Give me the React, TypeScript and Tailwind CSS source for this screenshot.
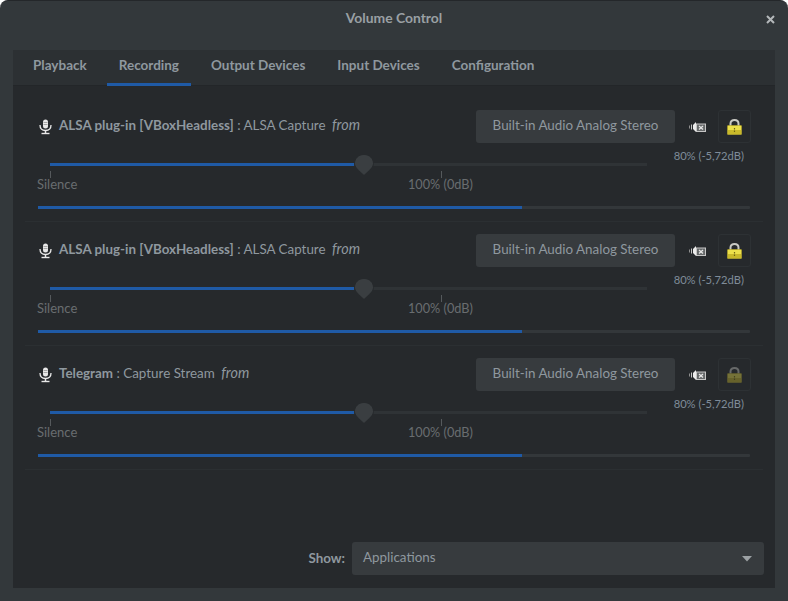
const tabs = ["Playback", "Recording", "Output Devices", "Input Devices", "Configuration"];

const streams = [
  { app: "ALSA plug-in [VBoxHeadless]", name: "ALSA Capture", locked: true },
  { app: "ALSA plug-in [VBoxHeadless]", name: "ALSA Capture", locked: true },
  { app: "Telegram", name: "Capture Stream", locked: false },
];

function MicIcon() {
  return (
    <svg width="13" height="16" viewBox="0 0 13 16" className="shrink-0">
      <rect x="4" y="0.5" width="5" height="9" rx="2.5" fill="#e8e8e8" />
      <path d="M1 6 C1 10 3.5 11.5 6.5 11.5 C9.5 11.5 12 10 12 6" fill="none" stroke="#e8e8e8" strokeWidth="1.3" />
      <path d="M6.5 11.5 V14" stroke="#e8e8e8" strokeWidth="1.5" />
      <path d="M2.5 14.5 H10.5" stroke="#e8e8e8" strokeWidth="1.4" />
      <path d="M4.5 3.5 H8.5 M4.5 5.5 H8.5" stroke="#8a8a8a" strokeWidth="0.7" />
    </svg>
  );
}

function MuteIcon() {
  return (
    <svg width="17" height="12" viewBox="0 0 17 12">
      <path d="M0 4.5 H1 V7.5 H0 Z" fill="#8f8f8f" />
      <path d="M2 3.5 H3 V8.5 H2 Z" fill="#c4c4c4" />
      <path d="M4 4 L7 1 V11 L4 8 Z" fill="#ececec" />
      <rect x="7" y="2.5" width="10" height="8.5" fill="#c6c6c6" />
      <rect x="8" y="3.5" width="8" height="6.5" fill="#66696a" />
      <path d="M10 5 L14 8.5 M14 5 L10 8.5" stroke="#e8e8e8" strokeWidth="1.3" />
    </svg>
  );
}

function LockIcon({ active }: { active: boolean }) {
  return (
    <svg width="15" height="16" viewBox="0 0 15 16" className={active ? "" : "opacity-40"}>
      <path d="M3.5 7 V4.5 C3.5 2.2 5.2 1 7.5 1 C9.8 1 11.5 2.2 11.5 4.5 V7" fill="none" stroke="#c9c9c4" strokeWidth="2" />
      <rect x="0.5" y="6.5" width="14" height="9" rx="0.5" fill="#ece04a" stroke="#b5a628" strokeWidth="0.6" />
      <rect x="1" y="11" width="13" height="4" fill="#c9b92a" />
      <path d="M7.5 9 V14" stroke="#6f6514" strokeWidth="1.2" strokeDasharray="1.5 1" />
    </svg>
  );
}

function StreamRow({ app, name, locked }: { app: string; name: string; locked: boolean }) {
  return (
    <div className="mx-[12px] h-[124px] border-b border-[#2b2f32] pt-[12px]">
      <div className="flex h-[33px] items-center pl-[14px] pr-[12px]">
        <MicIcon />
        <div className="ml-[7px] mb-[4px] flex-1 whitespace-nowrap leading-[20px]">
          <span className="font-bold">{app}</span>
          <span> : {name} </span>
          <i className="ml-[3px] text-[14.4px] leading-none">from</i>
        </div>
        <div className="flex h-[33px] w-[199px] items-center justify-center rounded-[3px] bg-[#373b3e] pb-[2px]">
          Built-in Audio Analog Stereo
        </div>
        <div className="flex w-[43px] justify-center pl-[2px] pt-[1px]">
          <MuteIcon />
        </div>
        <div className="flex h-[33px] w-[33px] items-center justify-center rounded-[3px] border border-[#2d3134] pt-[1px]">
          <LockIcon active={locked} />
        </div>
      </div>
      <div className="mt-[3px] pr-[19px] text-right text-[11.2px] leading-[20px] text-[#7f8c99]">80% (-5,72dB)</div>
      <div className="relative ml-[25px] mr-[116px] mt-[-3px] h-[3px] bg-[#2f3336]">
        <div className="h-[3px] w-[304px] bg-[#1f5aa6]" />
        <svg width="22" height="25" viewBox="0 0 22 25" className="absolute left-[303px] top-[-10px]">
          <path d="M11 1.5 C16.5 1.5 20.5 5.5 20.5 10.5 C20.5 14 17 17 11 22.5 C5 17 1.5 14 1.5 10.5 C1.5 5.5 5.5 1.5 11 1.5 Z" fill="#3a3e41" stroke="#26292c" strokeWidth="1" />
        </svg>
        <div className="absolute left-0 top-[8px] h-[7px] w-px bg-[#55595c]" />
        <div className="absolute left-[391px] top-[8px] h-[7px] w-px bg-[#55595c]" />
      </div>
      <div className="relative ml-[12px] mt-[8px] h-[20px] text-[13px] leading-[20px] text-[#696d70]">
        <span>Silence</span>
        <span className="absolute left-[371px] text-[12.7px]">100% (0dB)</span>
      </div>
      <div className="ml-[13px] mr-[13px] mt-[12px] h-[3px] rounded-[1px] bg-[#33373a]">
        <div className="h-[3px] w-[484px] bg-[#1f5aa6]" />
      </div>
    </div>
  );
}

export default function App() {
  return (
    <div className="flex h-[601px] w-[788px] flex-col rounded-t-[8px] border-t border-[#24272a] bg-[#33383b] px-[13px] pb-[13px] font-['Lato',sans-serif] text-[13.4px] text-[#8f989f]">
      <div className="relative flex h-[49px] shrink-0 justify-center pt-[7px] text-[13.9px] font-bold text-[#9aa0a4]">
        Volume Control
        <svg width="9" height="9" viewBox="0 0 9 9" className="absolute right-0 top-[14px]">
          <path d="M1 1 L8 8 M8 1 L1 8" stroke="#b4b8ba" strokeWidth="2" />
        </svg>
      </div>
      <div className="flex min-h-0 flex-1 flex-col bg-[#26292c]">
        <div className="flex h-[36px] shrink-0 border-b border-[#232629] bg-[#2c3033] pl-[8px] text-[13.5px] font-bold text-[#8f989f]">
          {tabs.map((tab) => (
            <div
              key={tab}
              className={`mr-[8px] flex h-[36px] items-center px-[12px] pb-[5px] ${tab === "Recording" ? "border-b-[3px] border-[#1f5aa6] pt-[3px]" : ""}`}
            >
              {tab}
            </div>
          ))}
        </div>
        <div className="flex-1 pt-[12px]">
          {streams.map((s, i) => (
            <StreamRow key={i} {...s} />
          ))}
        </div>
        <div className="flex items-center justify-end pb-[13px] pr-[11px]">
          <span className="mr-[7px] font-bold">Show:</span>
          <div className="flex h-[33px] w-[412px] items-center justify-between rounded-[3px] bg-[#373b3e] pb-[2px] pl-[11px] pr-[12px]">
            Applications
            <svg width="10" height="6" viewBox="0 0 10 6" className="mt-[3px]">
              <path d="M0 0 H10 L5 5.5 Z" fill="#9ca1a4" />
            </svg>
          </div>
        </div>
      </div>
    </div>
  );
}
